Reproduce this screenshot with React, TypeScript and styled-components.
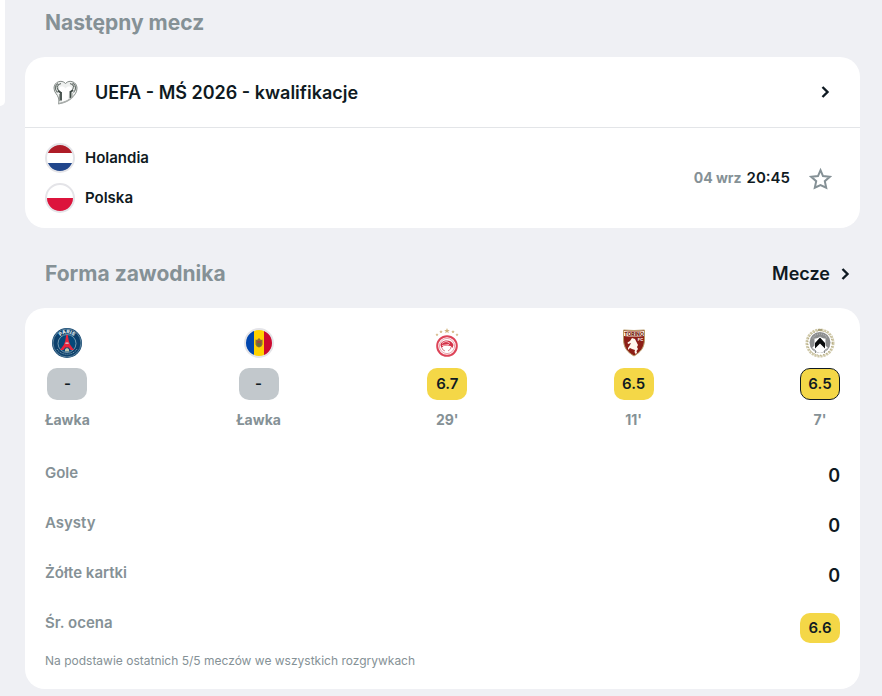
import React from "react";
import styled, { createGlobalStyle } from "styled-components";

const ink = "#0f1a22";
const muted = "#859196";

const GlobalStyle = createGlobalStyle`
  * { box-sizing: border-box; }
  body {
    margin: 0;
    background: #eff0f4;
    color: ${ink};
    font-family: Inter, "Open Sans", sans-serif;
    font-weight: 600;
  }
  h2, h3, p, ul, dl, dd { margin: 0; padding: 0; }
  a { color: inherit; text-decoration: none; }
`;

const Page = styled.div`
  display: flex;
  align-items: flex-start;
  gap: 20px;
  min-height: 100vh;
  padding-right: 22px;
`;

const SidePanel = styled.aside`
  flex: none;
  width: 5px;
  height: 106px;
  background: #fff;
  border-bottom-right-radius: 20px;
`;

const Main = styled.main`
  flex: 1;
  min-width: 0;
  padding-bottom: 8px;
`;

const SectionHead = styled.header<{ $first?: boolean }>`
  display: flex;
  align-items: center;
  justify-content: space-between;
  padding: ${(p) => (p.$first ? 9 : 32)}px 8px 20px 20px;
`;

const Title = styled.h2`
  color: ${muted};
  font-size: 21px;
  line-height: 28px;
  font-weight: 700;
`;

const MoreLink = styled.a`
  display: flex;
  align-items: center;
  gap: 8px;
  font-size: 18px;
  line-height: 24px;
`;

const Card = styled.section`
  background: #fff;
  border-radius: 20px;
`;

const Competition = styled.a`
  display: flex;
  align-items: center;
  height: 71px;
  padding: 0 28px 0 26px;
  border-bottom: 1px solid #e3e5e8;
`;

const CompetitionName = styled.h3`
  flex: 1;
  margin-left: 15px;
  font-size: 18px;
  line-height: 25px;
  font-weight: 600;
`;

const Match = styled.div`
  display: flex;
  align-items: center;
  height: 100px;
  padding: 0 28px 0 20px;
`;

const Teams = styled.ul`
  flex: 1;
  display: grid;
  gap: 10px;
  list-style: none;
`;

const Team = styled.li`
  display: flex;
  align-items: center;
  gap: 10px;
  height: 30px;
  font-size: 15px;
  line-height: 20px;
`;

const Kickoff = styled.p`
  display: flex;
  align-items: baseline;
  gap: 5px;
  font-size: 15px;
  line-height: 20px;
`;

const Day = styled.span`
  color: ${muted};
  font-size: 14px;
  font-weight: 700;
`;

const FavoriteButton = styled.button`
  display: flex;
  margin: 2px 0 0 19px;
  padding: 0;
  border: 0;
  background: none;
  cursor: pointer;
`;

const FormCard = styled(Card)`
  padding: 20px;
`;

const FormList = styled.ul`
  display: flex;
  justify-content: space-between;
  list-style: none;
`;

const FormItem = styled.li`
  display: flex;
  flex-direction: column;
  align-items: center;
  gap: 10px;
  color: ${muted};
  font-size: 14px;
  line-height: 20px;
  font-weight: 700;
`;

const Rating = styled.span<{ $tone: "none" | "mid"; $outlined?: boolean; $compact?: boolean }>`
  display: flex;
  align-items: center;
  justify-content: center;
  width: 40px;
  height: ${(p) => (p.$compact ? 30 : 32)}px;
  border: ${(p) => (p.$outlined ? `1px solid ${ink}` : "0")};
  border-radius: 10px;
  background: ${(p) => (p.$tone === "mid" ? "#f4d747" : "#c2c8cc")};
  color: ${ink};
  font-size: 15px;
  line-height: 20px;
  font-weight: 600;
`;

const Stats = styled.dl`
  display: grid;
  gap: 18px;
  margin-top: 30px;
`;

const Stat = styled.div`
  display: flex;
  align-items: flex-start;
  justify-content: space-between;
`;

const StatLabel = styled.dt`
  color: ${muted};
  font-size: 15px;
  line-height: 26px;
`;

const StatValue = styled.dd`
  font-size: 18px;
  line-height: 32px;
`;

const AverageValue = styled.dd`
  padding-top: 3px;
`;

const Footnote = styled.p`
  margin-top: 9px;
  color: ${muted};
  font-size: 12px;
  line-height: 17px;
  font-weight: 400;
`;

const Chevron = () => (
  <svg width="14" height="14" viewBox="0 0 14 14" fill="none" aria-hidden="true">
    <path d="M4.500 2 9.500 7l-5 5" stroke={ink} strokeWidth="2.400" />
  </svg>
);

const Star = () => (
  <svg width="23" height="24" viewBox="0 0 23 24" fill="none" aria-hidden="true">
    <path d="m11.500 3.200 2.500 5.900 6.800.7-5 4.400 1.400 6.500-5.700-2.700-5.700 2.700 1.400-6.500-5-4.400 6.800-.7z" stroke={muted} strokeWidth="2" />
  </svg>
);

const QualifiersLogo = () => (
  <svg width="29" height="29" viewBox="0 0 29 29" fill="none" aria-hidden="true">
    <path d="M14.500 5.500C10.500 1 3 4 3 10c0 5 3.500 6 4.500 10 .7 3 0 6 0 6 5-1.500 9-2.500 13-6 3-3 5.500-5 5.500-10 0-6-7.500-9-11.500-4.500z" fill="#eef0ef" stroke="#858c89" />
    <path d="M7 5.500c-3.500 2-3.500 6-.5 9M10 5.500c-4 1-5 5-2 7M21.500 5c4 2 4 6 1 9.500M19 5.500c4 1 5 4 1.500 7" stroke="#626b67" strokeWidth="1.100" />
    <path d="M9 9c2-1 4-.5 5.500 1.500C16 8.500 18 8 20 9l2 4-4 1-1 8-6 1.500L10 14l-3-1z" fill="#fff" />
    <path d="M10 14v8.500M19.500 13v7M7 12.500l3 2.500M22 12l-2.500 2" stroke="#3e4945" strokeWidth="1.800" />
    <path d="M8.500 16v7M21 15v4M4.500 8l3 2M24.500 8l-3 2" stroke="#939a96" strokeWidth="1" />
    <path d="M8 25.500c6-1 11-3.500 14-7" stroke="#abafad" strokeWidth="1.200" />
  </svg>
);

type Country = "nl" | "pl" | "md";

const Flag = ({ country }: { country: Country }) => {
  const clip = `flag-${country}`;
  return (
    <svg width="30" height="30" viewBox="0 0 30 30" fill="none" aria-hidden="true">
      <defs>
        <clipPath id={clip}><circle cx="15" cy="15" r="13.500" /></clipPath>
      </defs>
      <g clipPath={`url(#${clip})`}>
        {country === "nl" && <><path fill="#fff" d="M0 0h30v30H0z" /><path fill="#ae1c28" d="M0 0h30v10H0z" /><path fill="#21468b" d="M0 20h30v10H0z" /></>}
        {country === "pl" && <><path fill="#fff" d="M0 0h30v15H0z" /><path fill="#dc143c" d="M0 15h30v15H0z" /></>}
        {country === "md" && (
          <>
            <path fill="#0046ae" d="M0 0h10v30H0z" />
            <path fill="#ffd200" d="M10 0h10v30H10z" />
            <path fill="#cc092f" d="M20 0h10v30H20z" />
            <path fill="#8d6d37" d="m11.500 11.500 1.500.5 2-2 2 2 1.500-.5v5l-1.200 2L15 19.500l-2.300-1-1.200-2z" />
            <path fill="#a3483a" d="M13.300 13h3.500v2h-3.500z" />
            <path fill="#65713f" d="M13.300 15h3.500v2.500L15 18.800l-1.700-1.300z" />
          </>
        )}
      </g>
      <circle cx="15" cy="15" r="14" stroke="#e4e4e8" strokeWidth="2" />
    </svg>
  );
};

const ParisCrest = () => (
  <svg width="30" height="30" viewBox="0 0 30 30" fill="none" aria-hidden="true">
    <circle cx="15" cy="15" r="15" fill="#0c406c" />
    <circle cx="15" cy="15" r="14" stroke="#7e9fb2" strokeWidth=".7" />
    <circle cx="15" cy="15.500" r="9" fill="#064879" stroke="#8fadbe" strokeWidth=".8" />
    <defs><path id="paris-arc" d="M5.500 15a9.500 9.500 0 0 1 19 0" /></defs>
    <text fill="#e2ecef" fontFamily="Inter" fontSize="5" fontWeight="800"><textPath href="#paris-arc" startOffset="50%" textAnchor="middle">PARIS</textPath></text>
    <path d="M14.200 7h1.600l1 6 1.500 4 3.700 5h-3.500l-1.700-2.500h-3.600L11.500 22H8l3.700-5 1.500-4z" fill="#e9243d" />
    <path d="M13.600 14.500h2.800l.4 1.200h-3.600z" fill="#cedde4" />
    <path d="M13 22c0-2.500 4-2.500 4 0v1.500h-4z" fill="#c3c8ae" />
    <path d="M5 21c4 7 16 7 20 0" stroke="#7c9dae" strokeDasharray="1.200 .8" />
  </svg>
);

const OlympiacosCrest = () => (
  <svg width="30" height="30" viewBox="0 0 30 30" fill="none" aria-hidden="true">
    <path fill="#d1b27d" d="m15 0 .8 2h2l-1.600 1.200.6 2-1.800-1.200-1.800 1.200.6-2L12.200 2h2zM9 2l.5 1.200h1.300l-1 .8.4 1.300L9 4.500l-1.200.8.4-1.300-1-.8h1.300zM21 2l.5 1.200h1.300l-1 .8.4 1.300-1.200-.8-1.200.8.4-1.300-1-.8h1.300zM5 5l.4 1.200h1.200l-1 .8.400 1.200L5 7.500l-1 .7.400-1.200-1-.8h1.200zM25 5l.4 1.200h1.200l-1 .8.400 1.200-1-.7-1 .7.400-1.200-1-.8h1.200z" />
    <circle cx="15" cy="18" r="9.800" fill="#fff" stroke="#dd4458" strokeWidth="2" />
    <circle cx="15" cy="18" r="7.600" stroke="#e58c97" strokeWidth=".8" />
    <path d="M8.500 17.500c0-6 11-7 13-.5l-1 3-2-2-3-.5-4 .5-2 2z" fill="#d43249" />
    <path d="M10 15.500c3-2.500 5-2.500 8 0M10 17.500l7-1" stroke="#f8cfd3" strokeWidth=".9" />
    <path d="m10 20 1 2 2 1m6-4-.5 2-2.500 2" stroke="#dc8790" />
  </svg>
);

const TorinoCrest = () => (
  <svg width="30" height="30" viewBox="0 0 30 30" fill="none" aria-hidden="true">
    <path d="M4.500 2q10.500 1 21 0v9c0 9-4 13-10.500 17C8.500 24 4.500 20 4.500 11z" fill="#8d1f17" stroke="#b99d6a" />
    <path d="M5 3q10 1 20 0v5Q15 9 5 8z" fill="#fff2df" />
    <text x="15" y="7.500" fill="#711b13" fontFamily="Inter" fontSize="5" fontWeight="800" textAnchor="middle">TORINO</text>
    <text x="21.500" y="13" fill="#fff" fontFamily="Inter" fontSize="4" fontWeight="700" textAnchor="middle">FC</text>
    <path d="m13 10 3 1 1.500 3 1.500 3-1 2 1 2-1.500 2 .5 2-1.500 1-1-2 .5-2-3-1-2-1-2 2v-2l2-3 1-2-3 1-.5-1.500 2.500-1.500z" fill="#fff8ef" />
  </svg>
);

const UdineseCrest = () => (
  <svg width="30" height="30" viewBox="0 0 30 30" fill="none" aria-hidden="true">
    <circle cx="15" cy="15" r="13.200" stroke="#cfc8a8" strokeWidth="2.600" strokeDasharray="2.200 .8" />
    <circle cx="15" cy="15" r="12.200" stroke="#a79e72" strokeWidth="1" strokeDasharray="1 2" />
    <circle cx="15" cy="14.500" r="10.500" fill="#8b8d8e" />
    <path d="M8 10.500C9 4.500 21 4.500 22 10.500" stroke="#b5b5b5" strokeWidth="1.200" strokeDasharray="1 1" />
    <path d="M9.500 10.500c2 0 4-.5 5.500-2 1.500 1.500 3.500 2 5.500 2v7l2.500 2.500c-2 3-5 4-8 5-3-1-6-2-8-5l2.500-2.500z" fill="#fff" />
    <path d="m15 9.500 5 5.500v5.500l-5-5-5 5V15z" fill="#080b0c" />
    <path d="m7.500 20.500 3 2v2.500M22.500 20.500l-3 2V25" stroke="#8b8d8e" />
    <path d="M13 1h4v2h-4z" fill="#aaa27b" />
  </svg>
);

const teams: { name: string; country: Country }[] = [
  { name: "Holandia", country: "nl" },
  { name: "Polska", country: "pl" },
];

const form = [
  { id: "paris", crest: <ParisCrest />, rating: "-", note: "Ławka" },
  { id: "moldova", crest: <Flag country="md" />, rating: "-", note: "Ławka" },
  { id: "olympiacos", crest: <OlympiacosCrest />, rating: "6.7", note: "29'" },
  { id: "torino", crest: <TorinoCrest />, rating: "6.5", note: "11'" },
  { id: "udinese", crest: <UdineseCrest />, rating: "6.5", note: "7'", latest: true },
];

const stats = [
  { label: "Gole", value: 0 },
  { label: "Asysty", value: 0 },
  { label: "Żółte kartki", value: 0 },
];

export default function App() {
  return (
    <>
      <GlobalStyle />
      <Page>
        <SidePanel />
        <Main>
          <SectionHead $first>
            <Title>Następny mecz</Title>
          </SectionHead>
          <Card>
            <Competition href="#competition">
              <QualifiersLogo />
              <CompetitionName>UEFA - MŚ 2026 - kwalifikacje</CompetitionName>
              <Chevron />
            </Competition>
            <Match>
              <Teams>
                {teams.map((team) => (
                  <Team key={team.country}>
                    <Flag country={team.country} />
                    {team.name}
                  </Team>
                ))}
              </Teams>
              <Kickoff>
                <Day>04 wrz</Day>
                <time>20:45</time>
              </Kickoff>
              <FavoriteButton type="button" aria-label="Dodaj do ulubionych">
                <Star />
              </FavoriteButton>
            </Match>
          </Card>

          <SectionHead>
            <Title>Forma zawodnika</Title>
            <MoreLink href="#matches">
              Mecze
              <Chevron />
            </MoreLink>
          </SectionHead>
          <FormCard>
            <FormList>
              {form.map((item) => (
                <FormItem key={item.id}>
                  {item.crest}
                  <Rating $tone={item.rating === "-" ? "none" : "mid"} $outlined={item.latest}>
                    {item.rating}
                  </Rating>
                  <span>{item.note}</span>
                </FormItem>
              ))}
            </FormList>
            <Stats>
              {stats.map((stat) => (
                <Stat key={stat.label}>
                  <StatLabel>{stat.label}</StatLabel>
                  <StatValue>{stat.value}</StatValue>
                </Stat>
              ))}
              <Stat>
                <StatLabel>Śr. ocena</StatLabel>
                <AverageValue>
                  <Rating $tone="mid" $compact>6.6</Rating>
                </AverageValue>
              </Stat>
            </Stats>
            <Footnote>Na podstawie ostatnich 5/5 meczów we wszystkich rozgrywkach</Footnote>
          </FormCard>
        </Main>
      </Page>
    </>
  );
}
